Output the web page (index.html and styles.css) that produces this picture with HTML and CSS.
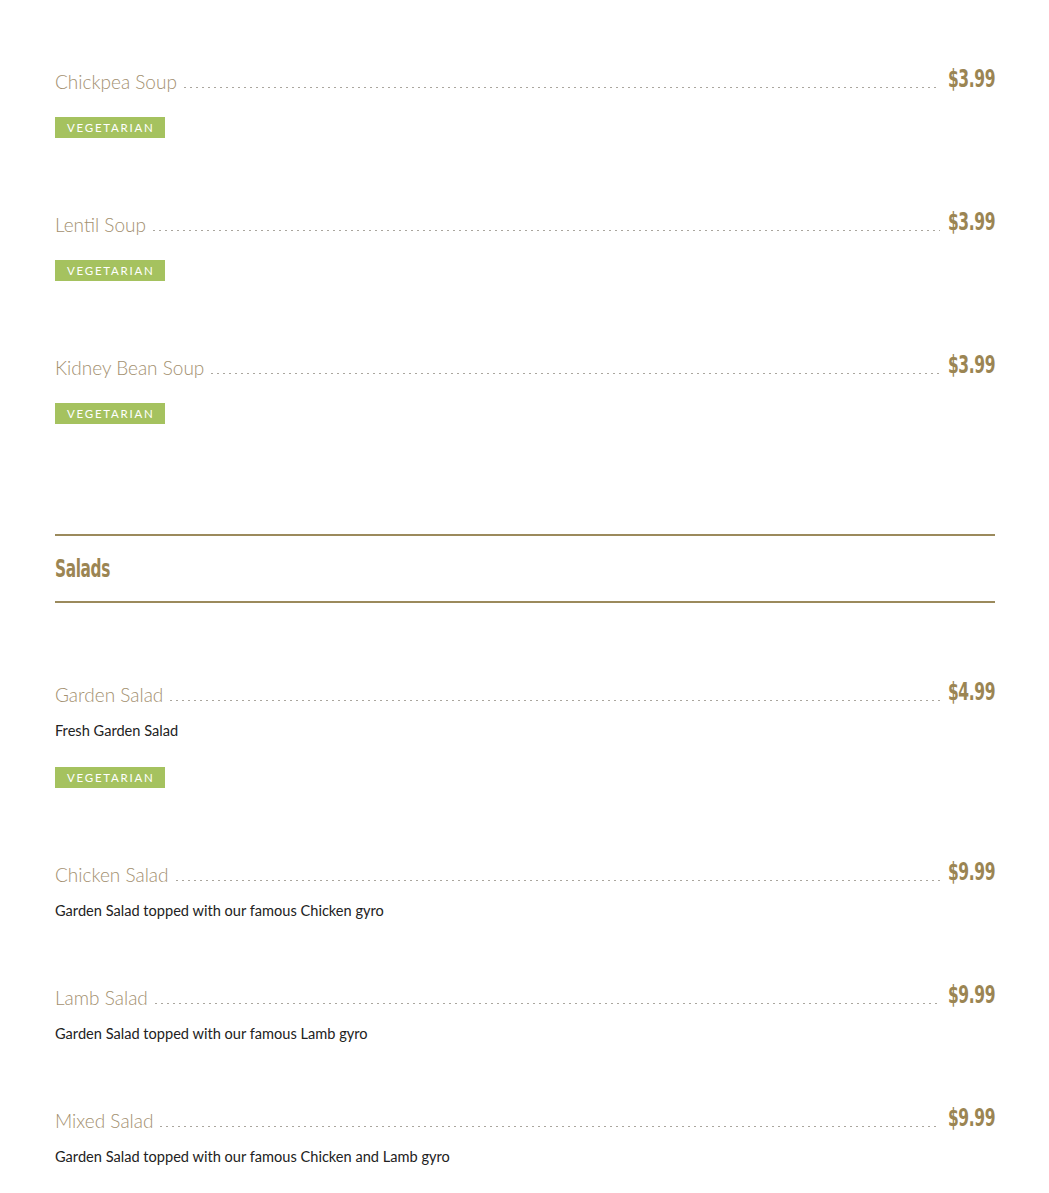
FILE: index.html
```html
<!DOCTYPE html>
<html lang="en">
<head>
<meta charset="utf-8">
<title>Menu</title>
<link rel="stylesheet" href="styles.css">
</head>
<body>
<main class="menu">
  <section class="section">
    <div class="items">
      <article class="item">
        <div class="row"><span class="name">Chickpea Soup</span><span class="leader"></span><span class="price">$3.99</span></div>
        <span class="tag">VEGETARIAN</span>
      </article>
      <article class="item">
        <div class="row"><span class="name">Lentil Soup</span><span class="leader"></span><span class="price">$3.99</span></div>
        <span class="tag">VEGETARIAN</span>
      </article>
      <article class="item">
        <div class="row"><span class="name">Kidney Bean Soup</span><span class="leader"></span><span class="price">$3.99</span></div>
        <span class="tag">VEGETARIAN</span>
      </article>
    </div>
  </section>
  <section class="section">
    <h2 class="section-title"><span class="section-title-text">Salads</span></h2>
    <div class="items">
      <article class="item">
        <div class="row"><span class="name">Garden Salad</span><span class="leader"></span><span class="price">$4.99</span></div>
        <p class="desc">Fresh Garden Salad</p>
        <span class="tag">VEGETARIAN</span>
      </article>
      <article class="item">
        <div class="row"><span class="name">Chicken Salad</span><span class="leader"></span><span class="price">$9.99</span></div>
        <p class="desc">Garden Salad topped with our famous Chicken gyro</p>
      </article>
      <article class="item">
        <div class="row"><span class="name">Lamb Salad</span><span class="leader"></span><span class="price">$9.99</span></div>
        <p class="desc">Garden Salad topped with our famous Lamb gyro</p>
      </article>
      <article class="item">
        <div class="row"><span class="name">Mixed Salad</span><span class="leader"></span><span class="price">$9.99</span></div>
        <p class="desc">Garden Salad topped with our famous Chicken and Lamb gyro</p>
      </article>
    </div>
  </section>
</main>
</body>
</html>
```

FILE: styles.css
```css
html, body {
  margin: 0;
  padding: 0;
  background: #ffffff;
}
body {
  font-family: Lato, "Liberation Sans", sans-serif;
}
.menu {
  padding: 68px 54px 0 55px;
}
.items {
  display: flex;
  flex-direction: column;
  gap: 60px;
}
.item {
  display: flex;
  flex-direction: column;
  align-items: flex-start;
}
.row {
  display: flex;
  align-items: baseline;
  width: 100%;
  height: 26px;
  line-height: 26px;
}
.name {
  font-size: 19px;
  font-weight: 300;
  color: #a39070;
  white-space: nowrap;
}
.leader {
  flex: 1;
  height: 1px;
  margin: 0 7px 0 7px;
  background-image: linear-gradient(to right, #aaa69e 2px, transparent 2px);
  background-size: 6px 1px;
  background-repeat: repeat-x;
  position: relative;
  top: -1px;
}
.price {
  display: inline-block;
  position: relative;
  top: -2px;
  font-family: "DejaVu Sans", sans-serif;
  font-weight: bold;
  font-size: 25px;
  color: #9b8553;
  letter-spacing: -0.6px;
  transform: scaleX(0.62);
  transform-origin: right center;
  margin-left: -28px;
}
.desc {
  margin: 14px 0 3px;
  font-size: 14.6px;
  line-height: 20px;
  color: #222222;
}
.tag {
  display: block;
  margin: 23px 0 13px;
  width: 110px;
  height: 21px;
  line-height: 21px;
  background: #a5c25f;
  color: #ffffff;
  font-size: 11.5px;
  font-weight: 400;
  letter-spacing: 1.75px;
  text-indent: 12px;
  box-sizing: border-box;
}
.section-title {
  margin: 97px 0 78px;
  padding: 20px 0 19px;
  border-top: 2px solid #9b8a5c;
  border-bottom: 2px solid #9b8a5c;
  font-family: "DejaVu Sans", sans-serif;
  font-weight: bold;
  font-size: 24px;
  line-height: 26px;
  color: #9b8553;
  letter-spacing: -0.6px;
}
.section-title-text {
  display: inline-block;
  transform: scaleX(0.64);
  transform-origin: left center;
}
```
